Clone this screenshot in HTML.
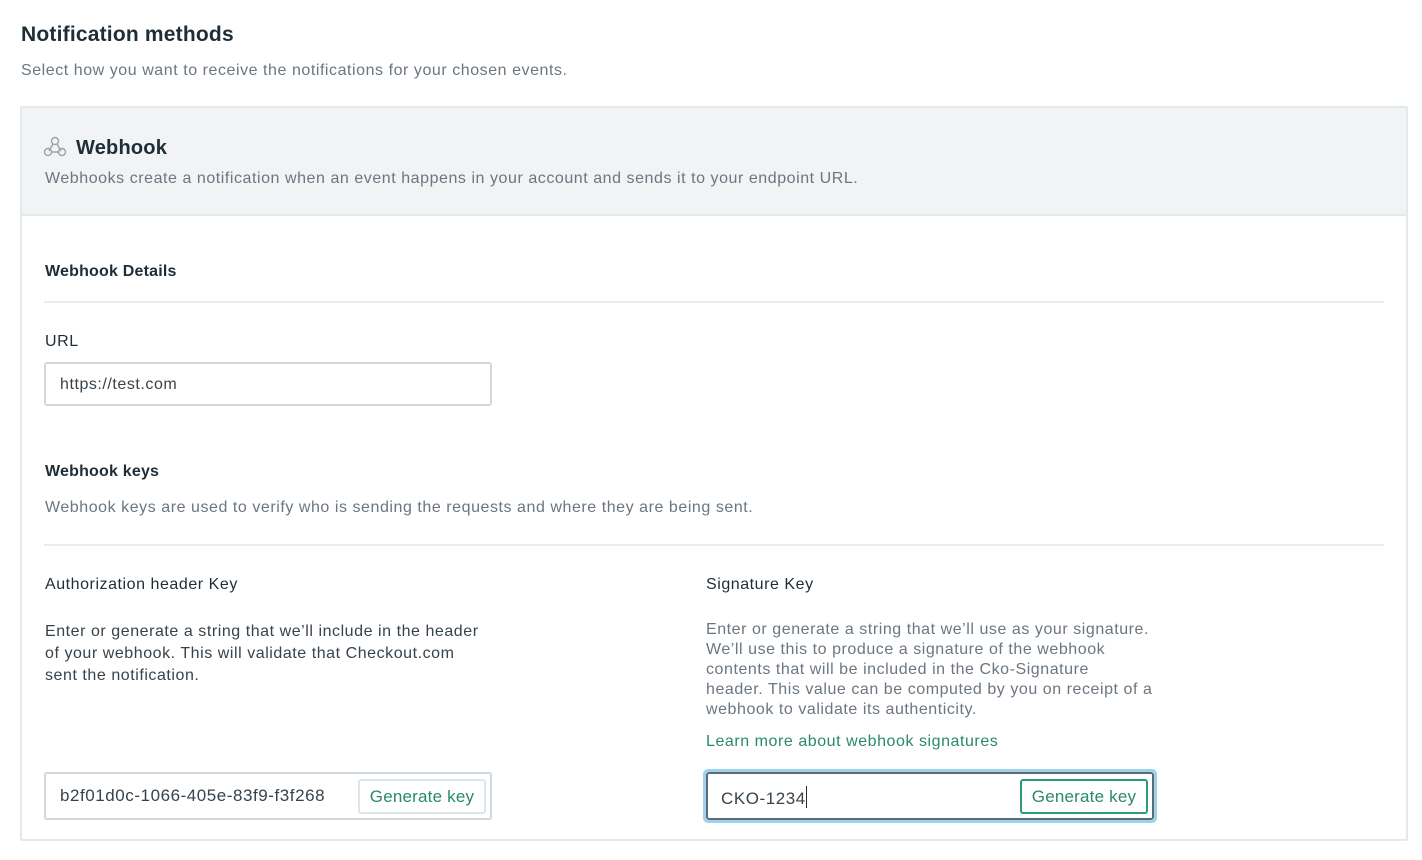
<!DOCTYPE html>
<html><head><meta charset="utf-8"><style>
*{margin:0;padding:0;box-sizing:border-box}
body{width:1422px;height:860px;background:#fff;font-family:"Liberation Sans",sans-serif;color:#1f2d36;position:relative;overflow:hidden}
.a{position:absolute;white-space:nowrap;letter-spacing:0.55px}
.g{color:#6b7680;font-size:16px}
.b{font-weight:bold;letter-spacing:0.2px}
.hr{position:absolute;left:44px;width:1340px;height:2px;background:#e8eef0}
.inp{position:absolute;background:#fff;border:2px solid #cfd8de;border-radius:3px}
.btn{position:absolute;border:2px solid #dde5e8;border-radius:3px;color:#2a8a68;font-size:17px;text-align:center;background:#fff;letter-spacing:0.2px}
</style></head><body>
<div class="a b" style="left:21px;top:23px;font-size:21px">Notification methods</div>
<div class="a g" style="left:21px;top:62px">Select how you want to receive the notifications for your chosen events.</div>
<div style="position:absolute;left:20px;top:106px;width:1388px;height:735px;border:2px solid #e3eaec;border-radius:2px"></div>
<div style="position:absolute;left:22px;top:108px;width:1384px;height:108px;background:#f2f3f5;border-bottom:2px solid #e3eaec"></div>
<svg class="a" style="left:43px;top:136px" width="24" height="22" viewBox="0 0 24 22" fill="none" stroke="#9aa3ab" stroke-width="1.4"><circle cx="12" cy="5" r="3.5"/><circle cx="5" cy="16" r="3.5"/><circle cx="19" cy="16" r="3.5"/><path d="M10 8l-4 7M8.5 16h7M14 8l4 7"/></svg>
<div class="a b" style="left:76px;top:137px;font-size:20px">Webhook</div>
<div class="a g" style="left:45px;top:170px">Webhooks create a notification when an event happens in your account and sends it to your endpoint URL.</div>
<div class="a b" style="left:45px;top:263px;font-size:16px">Webhook Details</div>
<div class="hr" style="top:301px"></div>
<div class="a" style="left:45px;top:333px;font-size:16px">URL</div>
<div class="inp" style="left:44px;top:362px;width:448px;height:44px"></div>
<div class="a" style="left:60px;top:376px;font-size:16px;color:#37434c">https://test.com</div>
<div class="a b" style="left:45px;top:463px;font-size:16px">Webhook keys</div>
<div class="a g" style="left:45px;top:499px">Webhook keys are used to verify who is sending the requests and where they are being sent.</div>
<div class="hr" style="top:544px"></div>
<div class="a" style="left:45px;top:576px;font-size:16px">Authorization header Key</div>
<div class="a" style="left:45px;top:621px;font-size:16px;line-height:22px;color:#37434c">Enter or generate a string that we’ll include in the header<br>of your webhook. This will validate that Checkout.com<br>sent the notification.</div>
<div class="a" style="left:706px;top:576px;font-size:16px">Signature Key</div>
<div class="a g" style="left:706px;top:620px;line-height:20px">Enter or generate a string that we’ll use as your signature.<br>We’ll use this to produce a signature of the webhook<br>contents that will be included in the Cko-Signature<br>header. This value can be computed by you on receipt of a<br>webhook to validate its authenticity.</div>
<div class="a" style="left:706px;top:733px;font-size:16px;color:#2a8a68">Learn more about webhook signatures</div>
<div class="inp" style="left:44px;top:772px;width:448px;height:48px"></div>
<div class="a" style="left:60px;top:786px;font-size:17px;color:#37434c;width:266px;overflow:hidden">b2f01d0c-1066-405e-83f9-f3f268</div>
<div class="btn" style="left:358px;top:779px;width:128px;height:35px;line-height:31px">Generate key</div>
<div style="position:absolute;left:703px;top:769px;width:454px;height:54px;border:3px solid #9fd3ec;border-radius:5px"></div>
<div class="inp" style="left:706px;top:772px;width:448px;height:48px;border-color:#5d6b78"></div>
<div class="a" style="left:721px;top:786px;font-size:17px;color:#37434c">CKO-1234<span style="display:inline-block;width:1.5px;height:22px;background:#1f2d36;vertical-align:-4px"></span></div>
<div class="btn" style="left:1020px;top:779px;width:128px;height:35px;line-height:31px;border-color:#2a9d76">Generate key</div>
</body></html>
